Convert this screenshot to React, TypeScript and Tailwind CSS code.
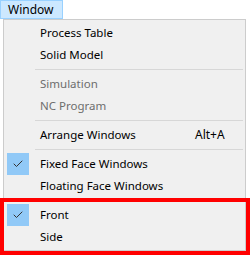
import { Check } from "lucide-react";

type Item = { label: string; disabled?: boolean; checked?: boolean; shortcut?: string } | "sep";

const items: Item[] = [
  { label: "Process Table" },
  { label: "Solid Model" },
  "sep",
  { label: "Simulation", disabled: true },
  { label: "NC Program", disabled: true },
  "sep",
  { label: "Arrange Windows", shortcut: "Alt+A" },
  "sep",
  { label: "Fixed Face Windows", checked: true },
  { label: "Floating Face Windows" },
  "sep",
  { label: "Front", checked: true },
  { label: "Side" },
];

function MenuRow({ item }: { item: Exclude<Item, "sep"> }) {
  return (
    <div className="h-[22px] flex items-center pl-[3px]">
      <div className={`w-[22px] h-[22px] flex items-center justify-center ${item.checked ? "bg-[#91c9f7]" : ""}`}>
        {item.checked && <Check size={12} strokeWidth={2} className="text-[#333333]" />}
      </div>
      <span className={`ml-[11px] w-[155px] text-[11.5px] ${item.disabled ? "text-[#6d6d6d]" : "text-black"}`}>{item.label}</span>
      {item.shortcut && <span className="text-black">{item.shortcut}</span>}
    </div>
  );
}

export default function App() {
  return (
    <div
      className="relative w-[250px] h-[255px] bg-white overflow-hidden text-[12px] leading-none"
      style={{ fontFamily: '"Segoe UI", "Noto Sans", sans-serif' }}
    >
      <div className="h-[19px] flex">
        <div className="w-[63px] h-[19px] bg-[#cce8ff] border border-[#99d1ff] flex items-center pl-[7px] text-black">
          Window
        </div>
      </div>
      <div className="ml-[3px] w-[243px] h-[232px] bg-[#f0f0f0] border border-[#cccccc] py-[2px]">
        {items.map((item, i) =>
          item === "sep" ? (
            <div key={i} className="h-[7px] flex items-center pl-[31px] pr-[2px]">
              <div className="h-px w-full bg-[#d7d7d7]" />
            </div>
          ) : (
            <MenuRow key={i} item={item} />
          )
        )}
      </div>
      <div className="absolute left-0 top-[198px] w-[250px] h-[57px] border-4 border-[#ff0000]" />
    </div>
  );
}
